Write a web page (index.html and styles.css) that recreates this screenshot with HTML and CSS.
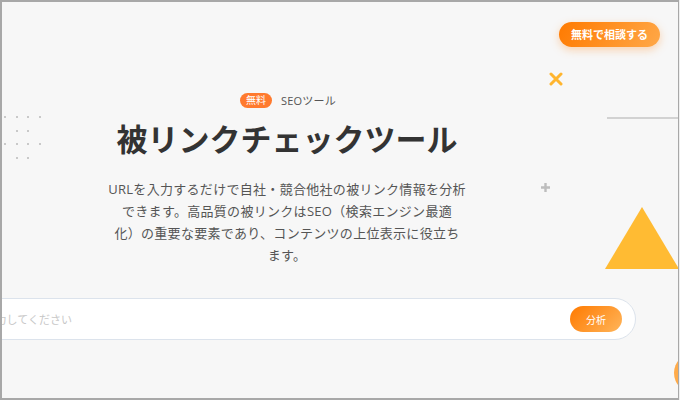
FILE: index.html
```html
<!DOCTYPE html>
<html lang="ja">
<head>
    <meta charset="UTF-8">
    <meta name="viewport" content="width=device-width, initial-scale=1.0">
    <title>被リンクチェックツール</title>
    <link rel="stylesheet" href="styles.css">
</head>
<body>
    <div class="frame">
        <!-- Decorations -->
        <div class="dots">
            <span></span><span></span><span></span><span></span>
            <span class="off"></span><span></span><span></span><span class="off"></span>
            <span></span><span></span><span></span><span></span>
            <span class="off"></span><span></span><span></span><span class="off"></span>
        </div>
        <svg class="deco-x" width="14" height="14" viewBox="0 0 14 14">
            <path d="M2 2 L12 12 M12 2 L2 12" stroke="#ffb52e" stroke-width="3" stroke-linecap="round"/>
        </svg>
        <div class="deco-line"></div>
        <svg class="deco-plus" width="11" height="11" viewBox="0 0 11 11">
            <path d="M5.5 1 V10 M1 5.5 H10" stroke="#bdbdbd" stroke-width="2.4"/>
        </svg>
        <svg class="deco-tri" width="74" height="62" viewBox="0 0 74 62">
            <polygon points="37,0 74,62 0,62" fill="#ffbb33"/>
        </svg>
        <div class="float-btn"></div>

        <a class="cta" href="#">無料で相談する</a>

        <main class="hero">
            <div class="tag-row">
                <span class="badge">無料</span>
                <span class="tag-text">SEOツール</span>
            </div>
            <h1>被リンクチェックツール</h1>
            <p class="lead">URLを入力するだけで自社・競合他社の被リンク情報を分析<br>できます。高品質の被リンクはSEO（検索エンジン最適<br>化）の重要な要素であり、コンテンツの上位表示に役立ち<br>ます。</p>

            <form class="search" onsubmit="return false;">
                <input type="text" placeholder="URLを入力してください">
                <button type="submit">分析</button>
            </form>
        </main>
    </div>
</body>
</html>
```

FILE: styles.css
```css
/* General styles */
* {
    box-sizing: border-box;
}

body {
    margin: 0;
    background: #efefef;
    font-family: 'Open Sans', 'Noto Sans CJK JP', sans-serif;
}

.frame {
    position: relative;
    width: 679px;
    height: 400px;
    background: #f7f7f7;
    border: 2px solid #a8a8a8;
    border-right-width: 1px;
    overflow: hidden;
}

/* Hero */
.hero {
    width: 570px;
    display: flex;
    flex-direction: column;
    align-items: center;
    padding-top: 90px;
}

.tag-row {
    display: flex;
    align-items: center;
    gap: 9px;
    margin-left: 2px;
}

.badge {
    background: #ff7a2e;
    color: #fff;
    font-size: 10px;
    line-height: 15px;
    padding: 0 6px;
    border-radius: 8px;
}

.tag-text {
    font-size: 11px;
    color: #555;
    letter-spacing: 0.2px;
}

h1 {
    margin: 9px 0 0;
    font-size: 31px;
    line-height: 44px;
    font-weight: bold;
    color: #333;
}

.lead {
    margin: 17px 0 0;
    width: 400px;
    text-align: center;
    font-size: 13px;
    line-height: 22px;
    color: #555;
    letter-spacing: 0.3px;
}

/* Search */
.search {
    flex-shrink: 0;
    margin-top: 32px;
    width: 698px;
    height: 42px;
    background: #fff;
    border: 1px solid #dce3ec;
    border-radius: 21px;
    display: flex;
    align-items: center;
    padding: 0 13px 0 12px;
}

.search input {
    flex: 1;
    border: none;
    outline: none;
    background: transparent;
    font-family: inherit;
    font-size: 11px;
    color: #333;
}

.search input::placeholder {
    color: #c8c8c8;
}

.search button {
    width: 52px;
    height: 26px;
    border: none;
    border-radius: 13px;
    background: linear-gradient(135deg, #ff7a00, #ffb55a);
    color: #fff;
    font-family: inherit;
    font-size: 10px;
    cursor: pointer;
}

/* Header button */
.cta {
    position: absolute;
    top: 20px;
    right: 18px;
    padding: 0 12px;
    line-height: 25px;
    border-radius: 13px;
    background: linear-gradient(120deg, #ff7a00, #ffa848);
    box-shadow: 0 3px 8px rgba(255, 140, 40, 0.35);
    color: #fff;
    font-size: 11px;
    font-weight: bold;
    text-decoration: none;
}

/* Decorations */
.dots {
    position: absolute;
    top: 114px;
    left: 2px;
    display: grid;
    grid-template-columns: repeat(4, 2px);
    column-gap: 9.5px;
    row-gap: 11.5px;
}

.dots span {
    width: 2px;
    height: 2px;
    background: #c9c9c9;
}

.dots span.off {
    visibility: hidden;
}

.deco-x {
    position: absolute;
    top: 70px;
    left: 547px;
}

.deco-line {
    position: absolute;
    top: 115px;
    left: 605px;
    width: 80px;
    height: 2px;
    background: #d2d2d2;
}

.deco-plus {
    position: absolute;
    top: 180px;
    left: 538px;
}

.deco-tri {
    position: absolute;
    top: 205px;
    left: 603px;
}

.float-btn {
    position: absolute;
    top: 351px;
    left: 672px;
    width: 40px;
    height: 40px;
    border-radius: 50%;
    background: #ffab4a;
}
```
